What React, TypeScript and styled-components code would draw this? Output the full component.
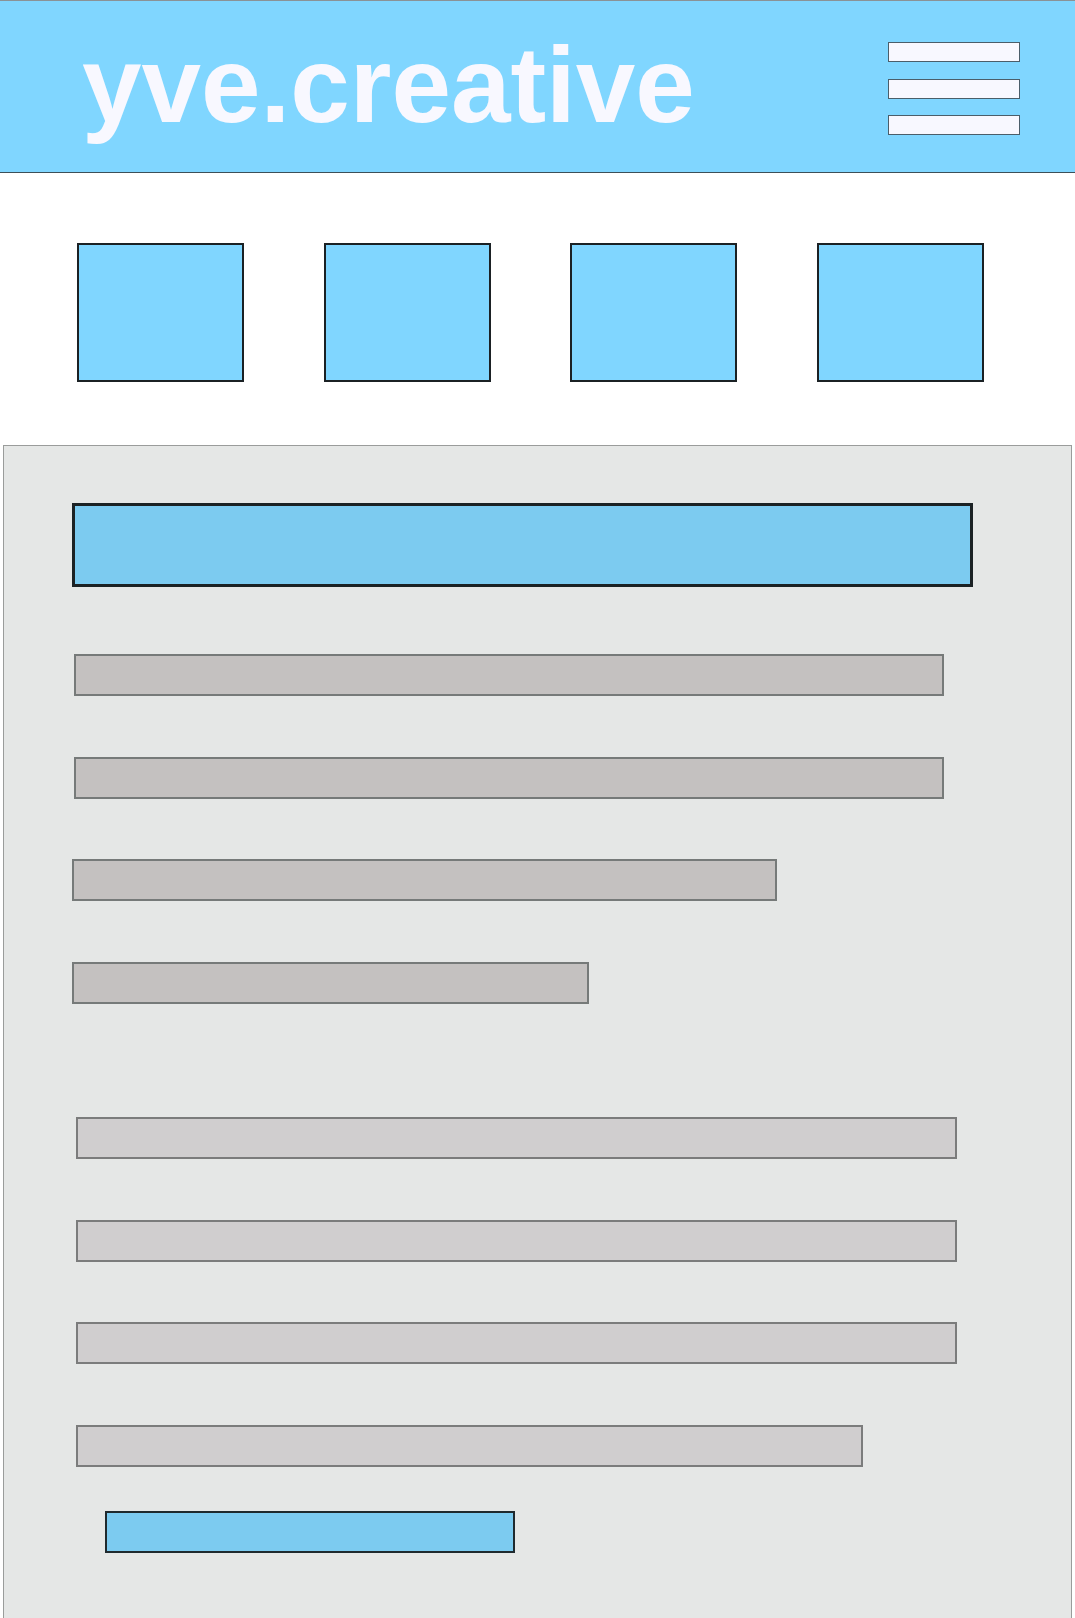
import React from "react";
import styled, { createGlobalStyle } from "styled-components";

const Global = createGlobalStyle`
  html, body {
    margin: 0;
    padding: 0;
    overflow: hidden;
    background: #ffffff;
  }
  body {
    font-family: "Liberation Sans", Arial, sans-serif;
  }
`;

const Page = styled.div`
  width: 1075px;
  display: flex;
  flex-direction: column;
`;

const Header = styled.header`
  box-sizing: border-box;
  height: 173px;
  background: #80d6ff;
  border-top: 1px solid #8a9296;
  border-bottom: 1px solid #3d4f58;
  display: flex;
  align-items: flex-start;
  justify-content: space-between;
  padding: 0 55px 0 82px;
`;

const Logo = styled.h1`
  margin: 31px 0 0;
  font-family: "Liberation Sans", Arial, sans-serif;
  font-weight: 700;
  font-size: 107px;
  line-height: 107px;
  color: #f8f8ff;
  letter-spacing: 0;
`;

const Burger = styled.div`
  margin-top: 41px;
  display: flex;
  flex-direction: column;
  gap: 16.5px;
`;

const BurgerBar = styled.span`
  display: block;
  box-sizing: border-box;
  width: 132px;
  height: 20px;
  background: #f8f8ff;
  border: 1px solid #4b5e6a;
`;

const Tiles = styled.section`
  display: flex;
  gap: 79.67px;
  padding: 70px 0 0 77px;
`;

const Tile = styled.div`
  box-sizing: border-box;
  width: 167px;
  height: 139px;
  background: #80d6ff;
  border: 2px solid #1b2124;
`;

const Panel = styled.main`
  box-sizing: border-box;
  margin: 63px 0 0 3px;
  width: 1069px;
  height: 1300px;
  background: #e5e7e6;
  border: 1px solid #9a9c9b;
  display: flex;
  flex-direction: column;
  align-items: flex-start;
  padding-top: 57px;
`;

const Heading = styled.div`
  box-sizing: border-box;
  margin-left: 68px;
  width: 901px;
  height: 84px;
  background: #7ccbf0;
  border: 3px solid #1b2224;
`;

const Line = styled.div<{ $left: number; $width: number; $top: number; $light?: boolean }>`
  box-sizing: border-box;
  margin-left: ${(p) => p.$left}px;
  margin-top: ${(p) => p.$top}px;
  width: ${(p) => p.$width}px;
  height: 42px;
  background: ${(p) => (p.$light ? "#d0cecf" : "#c4c1c0")};
  border: 2px solid ${(p) => (p.$light ? "#7b7c7c" : "#767a79")};
`;

const Button = styled.div`
  box-sizing: border-box;
  margin: 44px 0 0 101px;
  width: 410px;
  height: 42px;
  background: #7ccbf0;
  border: 2px solid #1f2a2e;
`;

const firstGroup = [
  { left: 70, width: 870, top: 67 },
  { left: 70, width: 870, top: 61 },
  { left: 68, width: 705, top: 60 },
  { left: 68, width: 517, top: 61 },
];

const secondGroup = [
  { left: 72, width: 881, top: 113 },
  { left: 72, width: 881, top: 61 },
  { left: 72, width: 881, top: 60 },
  { left: 72, width: 787, top: 61 },
];

export default function App() {
  return (
    <>
      <Global />
      <Page>
        <Header>
          <Logo>yve.creative</Logo>
          <Burger>
            <BurgerBar />
            <BurgerBar />
            <BurgerBar />
          </Burger>
        </Header>
        <Tiles>
          <Tile />
          <Tile />
          <Tile />
          <Tile />
        </Tiles>
        <Panel>
          <Heading />
          {firstGroup.map((l, i) => (
            <Line key={`a${i}`} $left={l.left} $width={l.width} $top={l.top} />
          ))}
          {secondGroup.map((l, i) => (
            <Line key={`b${i}`} $left={l.left} $width={l.width} $top={l.top} $light />
          ))}
          <Button />
        </Panel>
      </Page>
    </>
  );
}
